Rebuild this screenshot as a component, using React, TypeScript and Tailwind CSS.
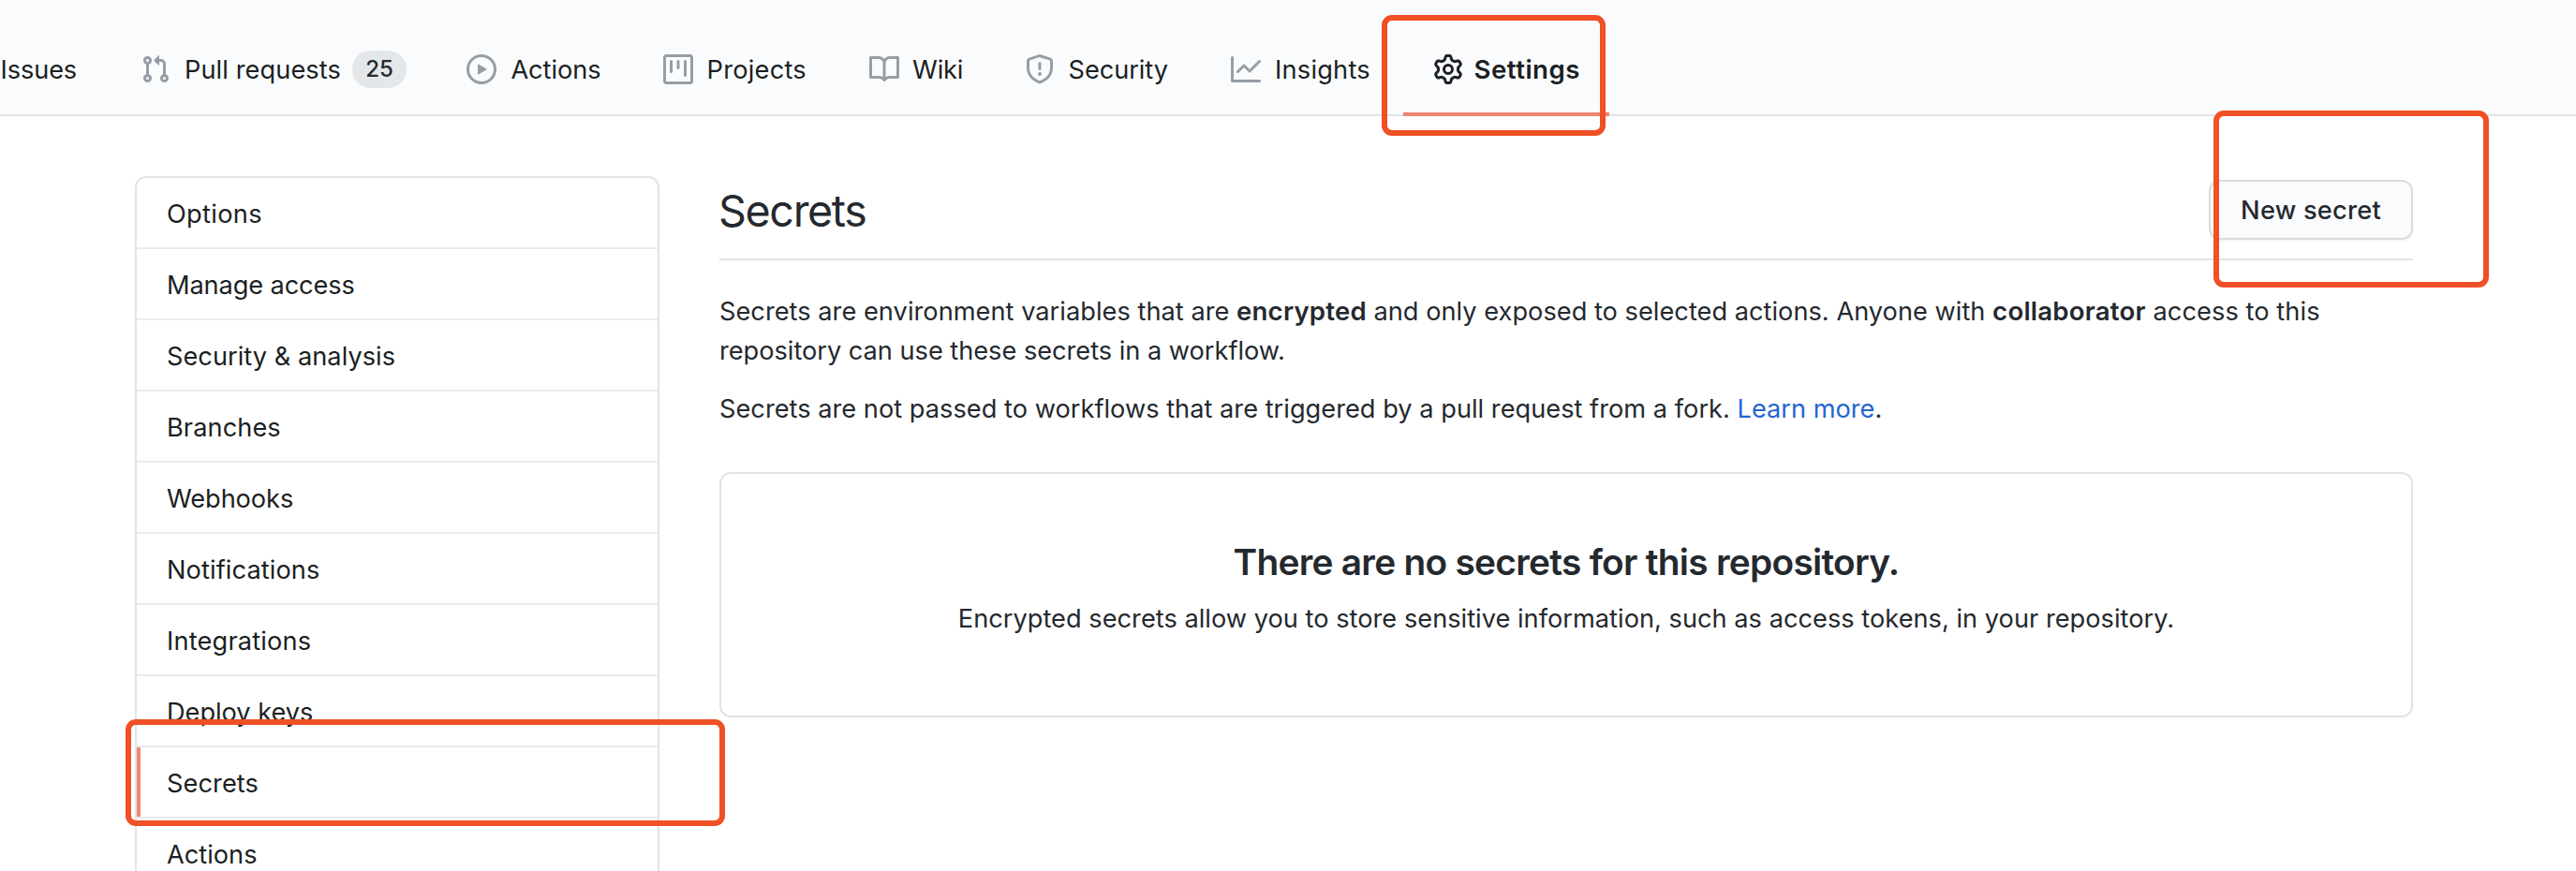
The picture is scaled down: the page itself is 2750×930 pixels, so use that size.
import type { ReactNode } from "react";

const paths = {
  pull: "M7.177 3.073L9.573.677A.25.25 0 0110 .854v4.792a.25.25 0 01-.427.177L7.177 3.427a.25.25 0 010-.354zM3.75 2.5a.75.75 0 100 1.5.75.75 0 000-1.5zm-2.25.75a2.25 2.25 0 113 2.122v5.256a2.251 2.251 0 11-1.5 0V5.372A2.25 2.25 0 011.5 3.25zM11 2.5h-1V4h1a1 1 0 011 1v5.628a2.251 2.251 0 101.5 0V5A2.5 2.5 0 0011 2.5zm1 10.25a.75.75 0 111.5 0 .75.75 0 01-1.5 0zM3.75 12a.75.75 0 100 1.5.75.75 0 000-1.5z",
  play: "M1.5 8a6.5 6.5 0 1113 0 6.5 6.5 0 01-13 0zM8 0a8 8 0 100 16A8 8 0 008 0zM6.379 5.227A.25.25 0 006 5.442v5.117a.25.25 0 00.379.214l4.264-2.559a.25.25 0 000-.428L6.379 5.227z",
  project: "M1.75 0A1.75 1.75 0 000 1.75v12.5C0 15.216.784 16 1.75 16h12.5A1.75 1.75 0 0016 14.25V1.75A1.75 1.75 0 0014.25 0H1.75zM1.5 1.75a.25.25 0 01.25-.25h12.5a.25.25 0 01.25.25v12.5a.25.25 0 01-.25.25H1.75a.25.25 0 01-.25-.25V1.75zM11.75 3a.75.75 0 00-.75.75v7.5a.75.75 0 001.5 0v-7.5a.75.75 0 00-.75-.75zm-8.25.75a.75.75 0 011.5 0v5.5a.75.75 0 01-1.5 0v-5.5zM8 3a.75.75 0 00-.75.75v3.5a.75.75 0 001.5 0v-3.5A.75.75 0 008 3z",
  book: "M0 1.75A.75.75 0 01.75 1h4.253c1.227 0 2.317.59 3 1.501A3.744 3.744 0 0111.006 1h4.245a.75.75 0 01.75.75v10.5a.75.75 0 01-.75.75h-4.507a2.25 2.25 0 00-1.591.659l-.622.621a.75.75 0 01-1.06 0l-.622-.621A2.25 2.25 0 005.258 13H.75a.75.75 0 01-.75-.75V1.75zm8.755 3a2.25 2.25 0 012.25-2.25H14.5v9h-3.757c-.71 0-1.4.201-1.992.572l.004-7.322zm-1.504 7.324l.004-5.073-.002-2.253A2.25 2.25 0 005.003 2.5H1.5v9h3.757a3.75 3.75 0 011.994.574z",
  shield: "M7.467.133a1.75 1.75 0 011.066 0l5.25 1.68A1.75 1.75 0 0115 3.48V7c0 1.566-.32 3.182-1.303 4.682-.983 1.498-2.585 2.813-5.032 3.855a1.7 1.7 0 01-1.33 0c-2.447-1.042-4.049-2.357-5.032-3.855C1.32 10.182 1 8.566 1 7V3.48a1.75 1.75 0 011.217-1.667l5.25-1.68zm.61 1.429a.25.25 0 00-.153 0l-5.25 1.68a.25.25 0 00-.174.238V7c0 1.358.275 2.666 1.057 3.86.784 1.194 2.121 2.34 4.366 3.297a.2.2 0 00.154 0c2.245-.956 3.582-2.104 4.366-3.298C13.225 9.666 13.5 8.36 13.5 7V3.48a.25.25 0 00-.174-.237l-5.25-1.68zM9 10.5a1 1 0 11-2 0 1 1 0 012 0zm-.25-5.75a.75.75 0 10-1.5 0v3a.75.75 0 001.5 0v-3z",
  graph: "M1.5 1.75a.75.75 0 00-1.5 0v12.5c0 .414.336.75.75.75h14.5a.75.75 0 000-1.5H1.5V1.75zm14.28 2.53a.75.75 0 00-1.06-1.06L10 7.94 7.53 5.47a.75.75 0 00-1.06 0L3.22 8.72a.75.75 0 001.06 1.06L7 7.06l2.47 2.47a.75.75 0 001.06 0l5.25-5.25z",
  gear: "M7.429 1.525a6.593 6.593 0 011.142 0c.036.003.108.036.137.146l.289 1.105c.147.56.55.967.997 1.189.174.086.341.183.501.29.417.278.97.423 1.53.27l1.102-.303c.11-.03.175.016.195.046.219.31.41.641.573.989.014.031.022.11-.059.19l-.815.806c-.411.406-.562.957-.53 1.456a4.588 4.588 0 010 .582c-.032.499.119 1.05.53 1.456l.815.806c.08.08.073.159.059.19a6.494 6.494 0 01-.573.99c-.02.029-.086.074-.195.045l-1.103-.303c-.559-.153-1.112-.008-1.529.27-.16.107-.327.204-.5.29-.449.222-.851.628-.998 1.189l-.289 1.105c-.029.11-.101.143-.137.146a6.613 6.613 0 01-1.142 0c-.036-.003-.108-.037-.137-.146l-.289-1.105c-.147-.56-.55-.967-.997-1.189a4.502 4.502 0 01-.501-.29c-.417-.278-.97-.423-1.53-.27l-1.102.303c-.11.03-.175-.016-.195-.046a6.492 6.492 0 01-.573-.989c-.014-.031-.022-.11.059-.19l.815-.806c.411-.406.562-.957.53-1.456a4.587 4.587 0 010-.582c.032-.499-.119-1.05-.53-1.456l-.815-.806c-.08-.08-.073-.159-.059-.19a6.44 6.44 0 01.573-.99c.02-.029.086-.075.195-.045l1.103.303c.559.153 1.112.008 1.529-.27.16-.107.327-.204.5-.29.449-.222.851-.628.998-1.189l.289-1.105c.029-.11.101-.143.137-.146zM8 0c-.236 0-.47.01-.701.03-.743.065-1.29.615-1.458 1.261l-.29 1.106c-.017.066-.078.158-.211.224a5.994 5.994 0 00-.668.386c-.123.082-.233.09-.3.071L3.27 2.776c-.644-.177-1.392.02-1.82.63a7.977 7.977 0 00-.704 1.217c-.315.675-.111 1.422.363 1.891l.815.806c.05.048.098.147.088.294a6.084 6.084 0 000 .772c.01.147-.038.246-.088.294l-.815.806c-.474.469-.678 1.216-.363 1.891.2.428.436.835.704 1.218.428.609 1.176.806 1.82.63l1.103-.303c.066-.019.176-.011.299.071.213.143.436.272.668.386.133.066.194.158.212.224l.289 1.106c.169.646.715 1.196 1.458 1.26a8.094 8.094 0 001.402 0c.743-.064 1.29-.614 1.458-1.26l.29-1.106c.017-.066.078-.158.211-.224a5.98 5.98 0 00.668-.386c.123-.082.233-.09.3-.071l1.102.302c.644.177 1.392-.02 1.82-.63.268-.382.505-.789.704-1.217.315-.675.111-1.422-.364-1.891l-.814-.806c-.05-.048-.098-.147-.088-.294a6.1 6.1 0 000-.772c-.01-.147.039-.246.088-.294l.814-.806c.475-.469.679-1.216.364-1.891a7.992 7.992 0 00-.704-1.218c-.428-.609-1.176-.806-1.82-.63l-1.103.303c-.066.019-.176.011-.299-.071a5.991 5.991 0 00-.668-.386c-.133-.066-.194-.158-.212-.224L10.16 1.29C9.99.645 9.444.095 8.701.031A8.094 8.094 0 008 0zm1.5 8a1.5 1.5 0 11-3 0 1.5 1.5 0 013 0zM11 8a3 3 0 11-6 0 3 3 0 016 0z",
};

function Octicon({ name, className }: { name: keyof typeof paths; className: string }) {
  return (
    <svg viewBox="0 0 16 16" className={`size-8 shrink-0 ${className}`} fill="currentColor" fillRule="evenodd" aria-hidden="true">
      <path d={paths[name]} />
    </svg>
  );
}

type Tab = { label: string; icon: keyof typeof paths; width: string; text: string; count?: number; active?: boolean };

const tabs: Tab[] = [
  { label: "Pull requests", icon: "pull", width: "w-[348px]", text: "pt-[2px] ml-[15px] tracking-[0.09px]", count: 25 },
  { label: "Actions", icon: "play", width: "w-[210px]", text: "pt-[2px] ml-[15.4px] tracking-[-0.05px]" },
  { label: "Projects", icon: "project", width: "w-[220px]", text: "pt-[2px] ml-[14.6px] tracking-[0.24px]" },
  { label: "Wiki", icon: "book", width: "w-[166px]", text: "pt-[2px] ml-[14px] tracking-[-0.15px]" },
  { label: "Security", icon: "shield", width: "w-[220px]", text: "pt-[2px] ml-[14.5px] tracking-[-0.05px]" },
  { label: "Insights", icon: "graph", width: "w-[216px]", text: "pt-[2px] ml-[15px] tracking-[0.23px]" },
  { label: "Settings", icon: "gear", width: "w-[220px]", text: "ml-[11.5px] tracking-[0.5px] text-[27.6px] font-semibold", active: true },
];

const menu = [
  { label: "Options", tracking: "tracking-[0.33px]" },
  { label: "Manage access", tracking: "tracking-[-0.12px]" },
  { label: "Security & analysis", tracking: "tracking-[0.03px]" },
  { label: "Branches", tracking: "tracking-[0.08px]" },
  { label: "Webhooks", tracking: "tracking-[-0.09px]" },
  { label: "Notifications", tracking: "tracking-[0.1px]" },
  { label: "Integrations", tracking: "tracking-[0.18px]" },
  { label: "Deploy keys", tracking: "tracking-[-0.03px]" },
  { label: "Secrets", tracking: "tracking-[0.08px]", active: true },
  { label: "Actions", tracking: "tracking-[0px]" },
];

function Highlight({ className }: { className: string }) {
  return <div className={`pointer-events-none absolute rounded-[11px] border-[6px] border-[#ef5025] ${className}`} />;
}

function Strong({ children, className }: { children: ReactNode; className: string }) {
  return <strong className={`text-[27.6px] font-semibold leading-none ${className}`}>{children}</strong>;
}

export default function App() {
  return (
    <div className="relative h-[930px] w-[2750px] overflow-hidden bg-white font-['Inter',sans-serif] text-[27.2px] leading-[42px] text-[#24292e]">
      <header className="h-[124px] border-b-2 border-[#e1e3e8] bg-[#fafbfd] text-[#1b1f23]">
        <nav className="flex h-[124px] pt-7">
          <a className="flex w-[118px] items-center border-b-4 border-transparent pl-[0.6px] pt-[2px] tracking-[-0.13px]">Issues</a>
          {tabs.map((tab) => (
            <a
              key={tab.label}
              className={`flex shrink-0 items-center whitespace-nowrap border-b-4 px-8 ${tab.width} ${tab.active ? "border-[#ed8571]" : "border-transparent"}`}
            >
              <Octicon name={tab.icon} className={tab.active ? "text-[#1b1f23]" : "text-[#959da5]"} />
              <span className={tab.text}>{tab.label}</span>
              {tab.count !== undefined && (
                <span className="ml-auto flex h-10 w-[58px] items-center justify-center rounded-full bg-[#e4e7ea] text-[24px] font-medium leading-10 text-[#24292e]">
                  {tab.count}
                </span>
              )}
            </a>
          ))}
        </nav>
      </header>

      <div className="flex gap-16 pl-36 pt-16">
        <aside className="w-[560px] shrink-0 self-start rounded-xl border-2 border-[#e1e3e8] text-[#1b1f23]">
          {menu.map((item) => (
            <a
              key={item.label}
              className={`flex h-[76px] items-stretch border-b-2 border-[#eaebf0] ${item.tracking}`}
            >
              <span className={`w-1 ${item.active ? "bg-[#f08875]" : ""}`} />
              <span className="flex items-center pl-[28px] pt-[4px]">{item.label}</span>
            </a>
          ))}
        </aside>

        <main className="w-[1808px] shrink-0">
          <div className="flex h-[90px] justify-between border-b-2 border-[#e1e3e8]">
            <h2 className="-ml-px pt-px text-[46.6px] leading-[72px] tracking-[-1.35px]">Secrets</h2>
            <button className="mt-1 flex h-16 w-[218px] items-center justify-center whitespace-nowrap rounded-xl border-2 border-[#d9dbdc] bg-[#fafbfd] pt-[2px] font-medium tracking-[0.24px] shadow-[0_2px_0_rgba(27,31,35,0.04)]">
              New secret
            </button>
          </div>

          <p className="mt-[34px] whitespace-nowrap">
            <span className="tracking-[0.03px]">Secrets are environment variables that are </span>
            <Strong className="tracking-[0.18px]">encrypted</Strong>
            <span className="tracking-[0.02px]"> and only exposed to selected actions. Anyone with </span>
            <Strong className="tracking-[0.22px]">collaborator</Strong>
            <span className="tracking-[0.08px]"> access to this</span>
            <br />
            <span className="tracking-[-0.02px]">repository can use these secrets in a workflow.</span>
          </p>
          <p className="mt-5 whitespace-nowrap">
            <span className="tracking-[0.02px]">
              Secrets are not passed to workflows that are triggered by a pull request from a fork.{" "}
            </span>
            <a className="text-[#2465d2]">Learn more</a>.
          </p>

          <section className="mt-[46px] h-[262px] rounded-xl border-2 border-[#e1e3e8] pt-16 text-center">
            <h3 className="text-[38.8px] font-semibold leading-[60px] tracking-[-0.71px]">There are no secrets for this repository.</h3>
            <p className="mt-[10px] tracking-[0.02px]">
              Encrypted secrets allow you to store sensitive information, such as access tokens, in your repository.
            </p>
          </section>
        </main>
      </div>

      <Highlight className="left-[1475px] top-4 h-[129px] w-[239px]" />
      <Highlight className="left-[2363px] top-[118px] h-[189px] w-[294px]" />
      <Highlight className="left-[134px] top-[768px] h-[114px] w-[640px]" />
    </div>
  );
}
